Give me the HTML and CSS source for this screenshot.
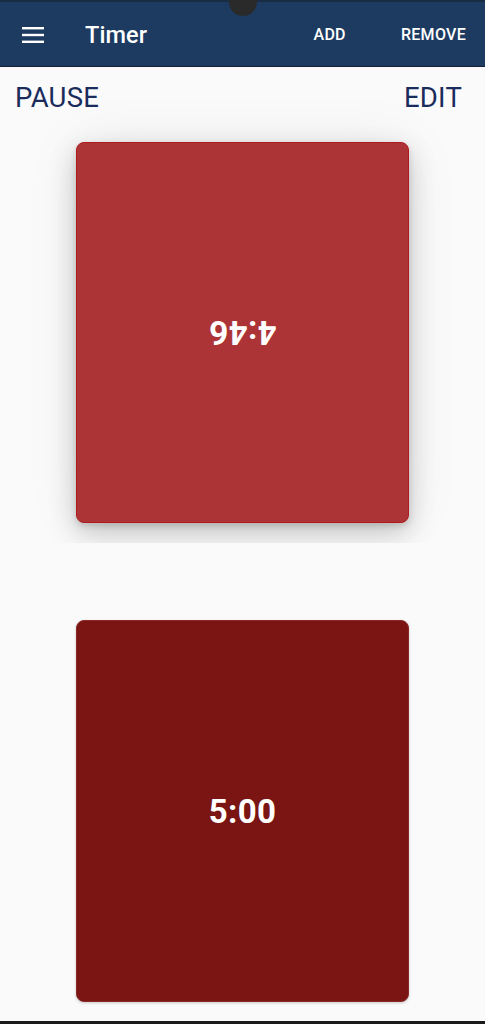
FILE: index.html
```html
<!DOCTYPE html>
<html>
<head>
<meta charset="utf-8">
<link rel="stylesheet" href="styles.css">
</head>
<body>
<div class="notch"></div>
<header class="appbar">
  <div class="menu">
    <svg width="22" height="16" viewBox="0 0 22 16"><rect x="0" y="0" width="22" height="2.4" fill="#fff"/><rect x="0" y="6.8" width="22" height="2.4" fill="#fff"/><rect x="0" y="13.6" width="22" height="2.4" fill="#fff"/></svg>
  </div>
  <div class="title">Timer</div>
  <div class="actions">
    <span class="act">ADD</span>
    <span class="act">REMOVE</span>
  </div>
</header>
<main class="content">
  <section class="player top">
    <div class="controls">
      <span class="ctl">PAUSE</span>
      <span class="ctl">EDIT</span>
    </div>
    <div class="card active"><span class="time flipped">4:46</span></div>
  </section>
  <section class="player bottom">
    <div class="card idle"><span class="time">5:00</span></div>
  </section>
</main>
<div class="navline"></div>
</body>
</html>
```
FILE: styles.css
```css
* { box-sizing: border-box; }
html, body { margin: 0; padding: 0; }
body {
  width: 485px;
  height: 1024px;
  background: #fafafa;
  font-family: Roboto, "Noto Sans", sans-serif;
  overflow: hidden;
  position: relative;
}
.notch {
  position: absolute;
  left: 229px;
  top: -12px;
  width: 28px;
  height: 28px;
  border-radius: 50%;
  background: #2a2a2a;
  z-index: 5;
}
.appbar {
  height: 67px;
  background: #1d3b61;
  border-top: 2px solid #1a2c42;
  border-bottom: 1px solid #13223a;
  display: flex;
  align-items: center;
  color: #fff;
  padding-top: 1px;
}
.menu {
  width: 22px;
  height: 16px;
  margin-left: 22px;
  display: flex;
}
.title {
  margin-left: 41px;
  font-size: 23.5px;
  font-weight: 500;
  letter-spacing: 0.1px;
}
.actions {
  margin-left: auto;
  display: flex;
  gap: 55px;
  margin-right: 19px;
}
.act {
  font-size: 16px;
  font-weight: 500;
  letter-spacing: 0.3px;
}
.content {
  display: flex;
  flex-direction: column;
}
.player {
  display: flex;
  flex-direction: column;
  align-items: center;
}
.player.top {
  height: 476px;
  overflow: hidden;
  padding-bottom: 20px;
}
.controls {
  width: 100%;
  display: flex;
  justify-content: space-between;
  padding: 14px 23px 0 15px;
  height: 75px;
}
.ctl {
  font-size: 27.5px;
  color: #1a2c5c;
  letter-spacing: 0.2px;
}
.card {
  width: 333px;
  height: 382px;
  border-radius: 8px;
  display: flex;
  align-items: center;
  justify-content: center;
}
.card.active {
  background: #ad3436;
  border: 1px solid #b01a1c;
  box-shadow: 0 10px 28px rgba(0,0,0,0.2), 0 3px 6px rgba(0,0,0,0.14), 0 0 60px rgba(0,0,0,0.06);
}
.player.bottom {
  padding-top: 77px;
}
.card.idle {
  background: #7a1513;
  border: 1px solid #8a2a28;
  box-shadow: 0 1px 3px rgba(0,0,0,0.2);
}
.time {
  color: #fff;
  font-size: 33px;
  font-weight: 700;
  letter-spacing: 0.4px;
}
.time.flipped {
  transform: rotate(180deg);
}
.navline {
  position: absolute;
  left: 0;
  bottom: 0;
  width: 485px;
  height: 3px;
  background: #1a1a1a;
}
```
